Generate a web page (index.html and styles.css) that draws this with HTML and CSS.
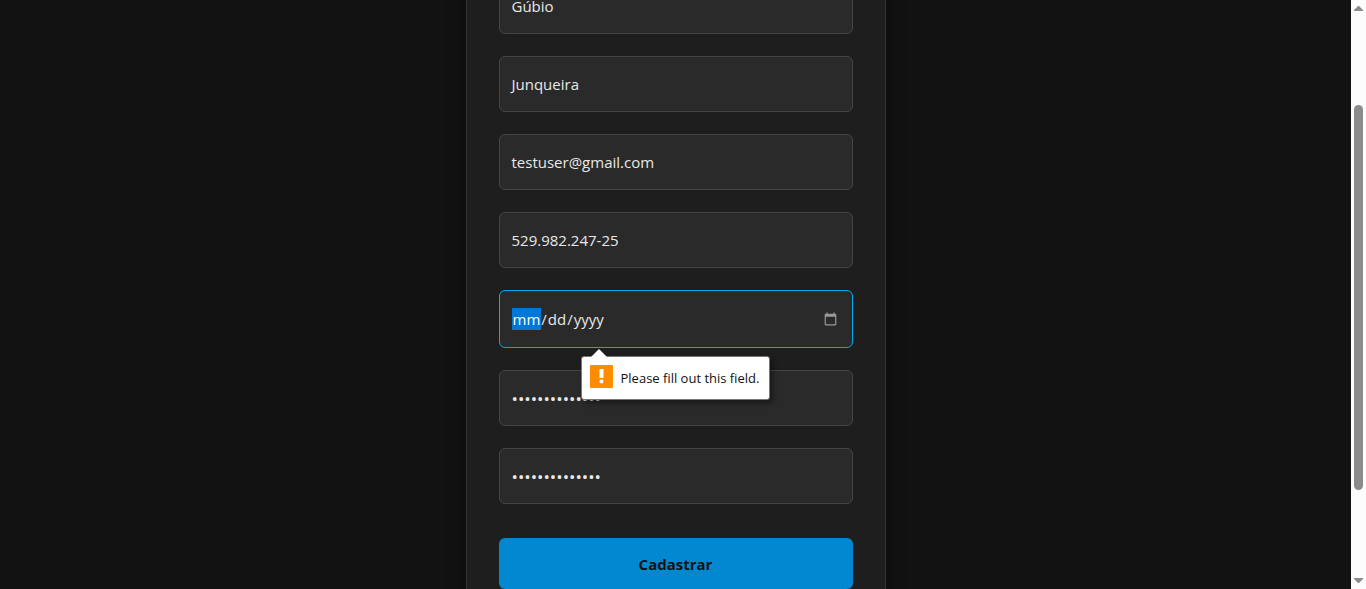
FILE: index.html
```html
<!DOCTYPE html>
<html lang="en-US">
<head>
<meta charset="utf-8">
<title>Cadastrar</title>
<link rel="stylesheet" href="styles.css">
</head>
<body>
<div class="window">
  <main class="page">
    <form class="card">
      <div class="field"><input class="input" type="text" aria-label="Nome" value="Gúbio"></div>
      <div class="field"><input class="input" type="text" aria-label="Sobrenome" value="Junqueira"></div>
      <div class="field"><input class="input" type="email" aria-label="E-mail" value="testuser@gmail.com"></div>
      <div class="field"><input class="input" type="text" aria-label="CPF" value="529.982.247-25"></div>
      <div class="field">
        <input class="input input-date" type="date" aria-label="Data de nascimento" aria-describedby="hint">
        <div class="bubble" id="hint" role="alert">
          <svg class="bubble-arrow" width="18" height="9" viewBox="0 0 18 9"><path d="M0 9 L9 0 L18 9Z" fill="#fff"/></svg>
          <svg class="bubble-icon" width="23" height="23" viewBox="0 0 23 23"><rect width="23" height="23" rx="1" fill="#ff8c00"/><path d="M9.500 4h4v9h-4z" fill="#fff"/><circle cx="11.500" cy="16.500" r="2" fill="#fff"/></svg>
          <span>Please fill out this field.</span>
        </div>
      </div>
      <div class="field"><input class="input input-password" type="password" aria-label="Senha" value="Senha123456789"></div>
      <div class="field"><input class="input input-password" type="password" aria-label="Confirmar senha" value="Senha123456789"></div>
      <button class="submit" type="submit">Cadastrar</button>
    </form>
  </main>
  <div class="scrollbar" aria-hidden="true">
    <svg width="9" height="5" viewBox="0 0 9 5"><path d="M0 5 L0 4 L4 0 H5 L9 4 V5Z" fill="#8b8b8b"/></svg>
    <div class="track"><div class="thumb"></div></div>
    <svg width="9" height="5" viewBox="0 0 9 5"><path d="M0 0 V1 L4 5 H5 L9 1 V0Z" fill="#8b8b8b"/></svg>
  </div>
</div>
</body>
</html>
```
FILE: styles.css
```css
* { box-sizing: border-box; }

body {
  margin: 0;
  background: #121212;
  color: #e0e0e0;
  font-family: "Segoe UI", "Open Sans", "Noto Sans", sans-serif;
  font-size: 15px;
}

.window {
  display: flex;
  height: 100vh;
  overflow: hidden;
}

.page {
  flex: 1;
  display: flex;
  justify-content: center;
  align-items: flex-start;
  overflow: hidden;
}

.card {
  display: flex;
  flex-direction: column;
  gap: 22px;
  width: 100%;
  max-width: 420px;
  margin-top: -61px;
  padding: 38px 32px;
  background: #1e1e1e;
  border: 1px solid #333;
  box-shadow: 0 0 15px rgba(0, 0, 0, 0.5);
}

.field { position: relative; }

.input {
  display: block;
  width: 100%;
  height: 56px;
  padding: 0 12px 0 10px;
  border: 1px solid #444;
  border-radius: 6px;
  outline: none;
  background: #2a2a2a;
  color: #e8e8e8;
  font-family: inherit;
  font-size: 15px;
  text-indent: 2px;
}

.input-password { font-size: 17px; }

.input-date {
  height: 58px;
  padding: 0 12px;
  border-color: #03a9f4;
  text-indent: 0;
}

.input-date::-webkit-datetime-edit-month-field {
  padding: 1px;
  background: #0078d7;
  color: #fff;
}

.input-date::-webkit-calendar-picker-indicator {
  filter: invert(0.6);
}

.bubble {
  position: absolute;
  z-index: 1;
  top: calc(100% + 8px);
  left: 82px;
  display: flex;
  align-items: center;
  gap: 8px;
  height: 44px;
  padding: 0 10px 0 8px;
  border: 1px solid #777;
  border-radius: 3px;
  background: #fff;
  box-shadow: 3px 3px 5px rgba(0, 0, 0, 0.4);
  color: #111;
  font-size: 13px;
  white-space: nowrap;
}

.bubble-icon { margin-bottom: 4px; }

.bubble-arrow {
  position: absolute;
  top: -8px;
  left: 8px;
}

.submit {
  height: 51px;
  margin-top: 12px;
  border: 0;
  border-radius: 6px;
  background: #0288d1;
  color: #121212;
  font-family: inherit;
  font-size: 15px;
  font-weight: 700;
}

.scrollbar {
  display: flex;
  flex-direction: column;
  align-items: center;
  width: 15px;
  padding: 6px 0;
  background: #fcfcfc;
}

.track {
  flex: 1;
  width: 9px;
  margin: 4px 0;
  padding-top: 90px;
}

.thumb {
  height: 82%;
  border-radius: 5px;
  background: #8b8b8b;
}
```
